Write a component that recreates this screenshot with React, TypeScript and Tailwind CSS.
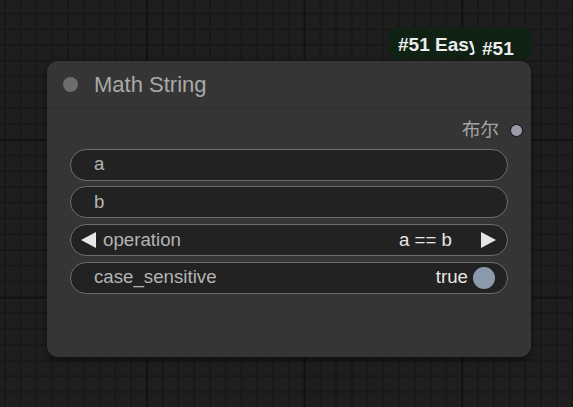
import React from 'react';

const font = "font-['Liberation_Sans','Noto_Sans_CJK_SC',Arial,sans-serif]";

const Widget: React.FC<{ children: React.ReactNode }> = ({ children }) => (
  <div className="flex h-[32px] items-center rounded-full border border-[#6c6c6c] bg-[#222222] text-[18.7px] leading-none">
    {children}
  </div>
);

export default function App() {
  return (
    <div
      className={`relative h-[407px] w-full overflow-hidden bg-[#1e1e1e] ${font} [background-image:linear-gradient(to_right,#121212_2px,transparent_2px),linear-gradient(to_bottom,#121212_2px,transparent_2px),linear-gradient(to_right,#181818_2px,transparent_2px),linear-gradient(to_bottom,#181818_2px,transparent_2px)] [background-size:157.7px_157.7px,157.7px_157.7px,15.77px_15.77px,15.77px_15.77px] [background-position:146px_0,0_139px,4px_0,0_12.5px]`}
    >
      {/* badges */}
      <div className="absolute left-[388px] top-[27px] flex h-[32px] w-[110px] items-start overflow-hidden rounded-[10px] bg-[#0f2213] pl-[10px] pt-[4px] text-[19px] font-bold whitespace-nowrap text-[#ececec]">
        #51 Easy Use
      </div>
      <div className="absolute left-[474px] top-[28px] flex h-[31px] w-[58px] items-start rounded-[10px] bg-[#0f2213] pl-[8px] pt-[7px] text-[19px] font-bold text-[#ececec]">
        #51
      </div>

      {/* node */}
      <div className="absolute left-[47px] top-[61px] flex h-[296px] w-[484px] flex-col rounded-[11px] bg-[#353535] shadow-[0_2px_6px_rgba(0,0,0,0.55)]">
        <div className="flex h-[47px] items-center border-b border-[#2d2d2d] pl-[16px]">
          <span className="h-[15px] w-[15px] rounded-full bg-[#6d6d6d]" />
          <span className="ml-[16px] text-[22px] text-[#a9a9a9]">Math String</span>
        </div>

        <div className="flex items-center justify-end pr-[8px] pt-[13px]">
          <span className="text-[18.7px] leading-none text-[#a3a3a3]">布尔</span>
          <span className="ml-[11px] h-[13px] w-[13px] rounded-full border-[1.5px] border-[#111] bg-[#9b99aa]" />
        </div>

        <div className="mx-[23px] mt-[9px] flex flex-col gap-[5.7px]">
          <Widget>
            <span className="pl-[23px] text-[#b4b4b4]">a</span>
          </Widget>
          <Widget>
            <span className="pl-[23px] text-[#b4b4b4]">b</span>
          </Widget>
          <Widget>
            <svg width="15" height="16" viewBox="0 0 15 16" className="ml-[10px]">
              <polygon points="15,0 15,16 0,8" fill="#e6e6e6" />
            </svg>
            <span className="ml-[7px] text-[#b4b4b4]">operation</span>
            <span className="ml-auto text-[#e6e6e6]">a == b</span>
            <svg width="15" height="16" viewBox="0 0 15 16" className="ml-[29px] mr-[11px]">
              <polygon points="0,0 0,16 15,8" fill="#e6e6e6" />
            </svg>
          </Widget>
          <Widget>
            <span className="pl-[23px] text-[#b4b4b4]">case_sensitive</span>
            <span className="ml-auto text-[#e6e6e6]">true</span>
            <span className="ml-[5px] mr-[12px] h-[22px] w-[22px] rounded-full bg-[#8a9aab]" />
          </Widget>
        </div>
      </div>
    </div>
  );
}
